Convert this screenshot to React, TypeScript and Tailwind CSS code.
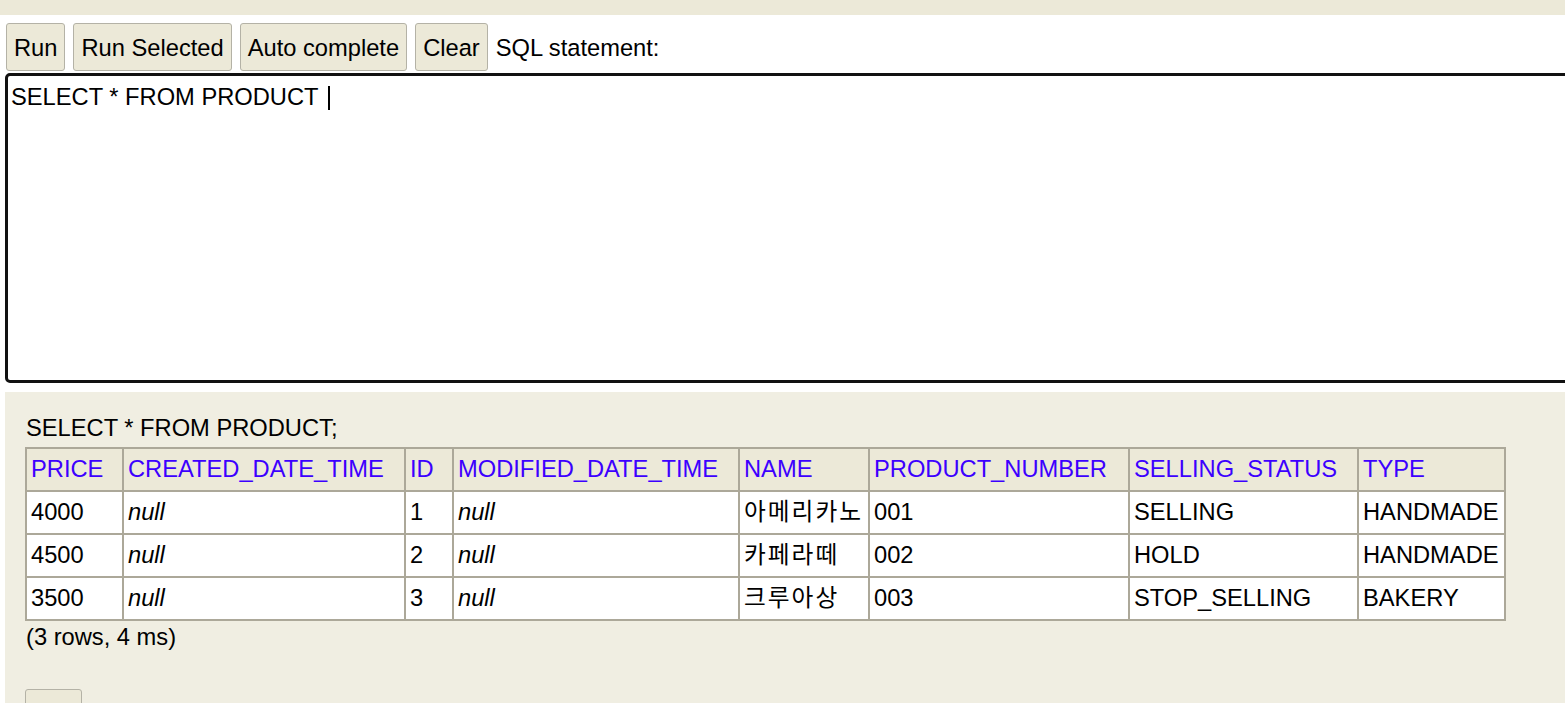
import React from 'react';

const columns = [
  { label: 'PRICE', w: 'w-[97px]' },
  { label: 'CREATED_DATE_TIME', w: 'w-[282px]' },
  { label: 'ID', w: 'w-[48px]' },
  { label: 'MODIFIED_DATE_TIME', w: 'w-[286px]' },
  { label: 'NAME', w: 'w-[130px]' },
  { label: 'PRODUCT_NUMBER', w: 'w-[260px]' },
  { label: 'SELLING_STATUS', w: 'w-[229px]' },
  { label: 'TYPE', w: 'w-[147px]' },
];

const rows = [
  ['4000', null, '1', null, '아메리카노', '001', 'SELLING', 'HANDMADE'],
  ['4500', null, '2', null, '카페라떼', '002', 'HOLD', 'HANDMADE'],
  ['3500', null, '3', null, '크루아상', '003', 'STOP_SELLING', 'BAKERY'],
];

const ToolButton = ({ label }: { label: string }) => (
  <button className="h-[48px] px-[7px] pt-[4px] bg-[#ece9d8] border border-[#b4b2a6] rounded-[3px] text-black leading-none">
    {label}
  </button>
);

const App: React.FC = () => {
  return (
    <div
      className="w-[1565px] h-[703px] overflow-hidden bg-white text-black text-[23.7px]"
      style={{ fontFamily: '"Liberation Sans", "Noto Sans CJK KR", sans-serif' }}
    >
      <div className="h-[15px] bg-[#ece9d8]" />

      {/* toolbar */}
      <div className="flex items-center gap-[8px] pl-[6px] pt-[8px]">
        <ToolButton label="Run" />
        <ToolButton label="Run Selected" />
        <ToolButton label="Auto complete" />
        <ToolButton label="Clear" />
        <span className="leading-none pt-[4px]">SQL statement:</span>
      </div>

      {/* editor */}
      <div className="ml-[5px] mt-[2px] w-[1600px] h-[310px] border-[3px] border-[#111] rounded-[5px] pl-[3px] pr-[4px] pt-[8px]">
        <div className="flex items-center leading-[27px]">
          <span className="whitespace-pre">SELECT * FROM PRODUCT </span>
          <span className="inline-block ml-[3px] w-[2px] h-[24px] bg-black" />
        </div>
      </div>

      {/* result */}
      <div className="ml-[5px] mt-[9px] h-[400px] bg-[#f0eee2] pl-[20px] pt-[23px]">
        <div className="leading-[27px] mb-[5px] pl-[1px]">SELECT * FROM PRODUCT;</div>
        <table className="table-fixed w-[1479px] border-collapse">
          <thead>
            <tr className="h-[43px] bg-[#ece9d8]">
              {columns.map((c) => (
                <th
                  key={c.label}
                  className={`${c.w} border-2 border-[#aca899] px-[4px] text-left font-normal text-[#3c00ff] whitespace-nowrap`}
                >
                  {c.label}
                </th>
              ))}
            </tr>
          </thead>
          <tbody>
            {rows.map((r, i) => (
              <tr key={i} className="h-[43px] bg-white">
                {r.map((v, j) => (
                  <td key={j} className="border-2 border-[#aca899] px-[4px] whitespace-nowrap">
                    {v === null ? (
                      <i>null</i>
                    ) : j === 4 ? (
                      <span className="tracking-[2px]">{v}</span>
                    ) : (
                      v
                    )}
                  </td>
                ))}
              </tr>
            ))}
          </tbody>
        </table>
        <div className="leading-[27px] mt-[3px] pl-[1px]">(3 rows, 4 ms)</div>
        <div className="mt-[38px] w-[57px] h-[40px] bg-[#ece9d8] border border-[#b4b2a6] rounded-[3px]" />
      </div>
    </div>
  );
};

export default App;
